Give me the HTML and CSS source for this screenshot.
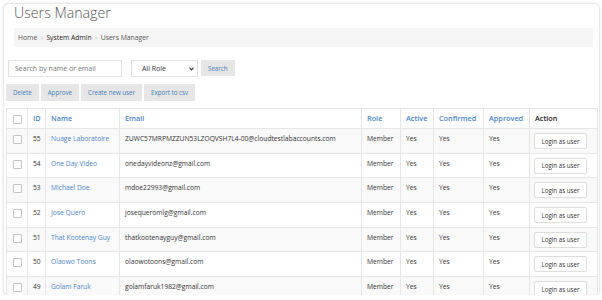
FILE: index.html
```html
<!DOCTYPE html>
<html lang="en">

<head>
    <meta charset="UTF-8">
    <meta name="viewport" content="width=device-width, initial-scale=1.0">
    <title>Users Manager</title>
    <link rel="stylesheet" href="styles.css">
</head>

<body>
    <div class="card">
        <h1 class="page-title">Users Manager</h1>

        <div class="breadcrumb">
            <span>Home</span>
            <span class="sep">&gt;</span>
            <span class="current-section">System Admin</span>
            <span class="sep">&gt;</span>
            <span>Users Manager</span>
        </div>

        <div class="search-bar">
            <input type="text" class="search-input" placeholder="Search by name or email">
            <div class="role-select">
                <span>All Role</span>
                <svg width="5" height="4" viewBox="0 0 5 4"><path d="M0.5 0.7 L2.5 2.8 L4.5 0.7" fill="none" stroke="#333" stroke-width="1.2"/></svg>
            </div>
            <button class="btn">Search</button>
        </div>

        <div class="actions">
            <button class="btn">Delete</button>
            <button class="btn">Approve</button>
            <button class="btn">Create new user</button>
            <button class="btn">Export to csv</button>
        </div>

        <table class="users-table">
            <colgroup>
                <col style="width: 21px">
                <col style="width: 18px">
                <col style="width: 74px">
                <col style="width: 242px">
                <col style="width: 39px">
                <col style="width: 33px">
                <col style="width: 50px">
                <col style="width: 46px">
                <col>
            </colgroup>
            <thead>
                <tr>
                    <th class="cb-cell"><span class="checkbox"></span></th>
                    <th>ID</th>
                    <th>Name</th>
                    <th>Email</th>
                    <th>Role</th>
                    <th>Active</th>
                    <th>Confirmed</th>
                    <th>Approved</th>
                    <th class="plain">Action</th>
                </tr>
            </thead>
            <tbody>
                <tr>
                    <td class="cb-cell"><span class="checkbox"></span></td>
                    <td>55</td>
                    <td><a href="#">Nuage Laboratoire</a></td>
                    <td>ZUWC57MRPMZZUN53LZOQVSH7L4-00@cloudtestlabaccounts.com</td>
                    <td>Member</td>
                    <td>Yes</td>
                    <td>Yes</td>
                    <td>Yes</td>
                    <td><button class="btn-login">Login as user</button></td>
                </tr>
                <tr>
                    <td class="cb-cell"><span class="checkbox"></span></td>
                    <td>54</td>
                    <td><a href="#">One Day Video</a></td>
                    <td>onedayvideonz@gmail.com</td>
                    <td>Member</td>
                    <td>Yes</td>
                    <td>Yes</td>
                    <td>Yes</td>
                    <td><button class="btn-login">Login as user</button></td>
                </tr>
                <tr>
                    <td class="cb-cell"><span class="checkbox"></span></td>
                    <td>53</td>
                    <td><a href="#">Michael Doe</a></td>
                    <td>mdoe22993@gmail.com</td>
                    <td>Member</td>
                    <td>Yes</td>
                    <td>Yes</td>
                    <td>Yes</td>
                    <td><button class="btn-login">Login as user</button></td>
                </tr>
                <tr>
                    <td class="cb-cell"><span class="checkbox"></span></td>
                    <td>52</td>
                    <td><a href="#">Jose Quero</a></td>
                    <td>josequeromlg@gmail.com</td>
                    <td>Member</td>
                    <td>Yes</td>
                    <td>Yes</td>
                    <td>Yes</td>
                    <td><button class="btn-login">Login as user</button></td>
                </tr>
                <tr>
                    <td class="cb-cell"><span class="checkbox"></span></td>
                    <td>51</td>
                    <td><a href="#">That Kootenay Guy</a></td>
                    <td>thatkootenayguy@gmail.com</td>
                    <td>Member</td>
                    <td>Yes</td>
                    <td>Yes</td>
                    <td>Yes</td>
                    <td><button class="btn-login">Login as user</button></td>
                </tr>
                <tr>
                    <td class="cb-cell"><span class="checkbox"></span></td>
                    <td>50</td>
                    <td><a href="#">Olaowo Toons</a></td>
                    <td>olaowotoons@gmail.com</td>
                    <td>Member</td>
                    <td>Yes</td>
                    <td>Yes</td>
                    <td>Yes</td>
                    <td><button class="btn-login">Login as user</button></td>
                </tr>
                <tr>
                    <td class="cb-cell"><span class="checkbox"></span></td>
                    <td>49</td>
                    <td><a href="#">Golam Faruk</a></td>
                    <td>golamfaruk1982@gmail.com</td>
                    <td>Member</td>
                    <td>Yes</td>
                    <td>Yes</td>
                    <td>Yes</td>
                    <td><button class="btn-login">Login as user</button></td>
                </tr>
            </tbody>
        </table>
    </div>
</body>

</html>
```

FILE: styles.css
```css
body {
    margin: 0;
    background: #fff;
    font-family: "Open Sans", "DejaVu Sans", sans-serif;
    font-size: 6.7px;
    color: #333;
}

.card {
    margin: 4px 3px 0 4px;
    height: 291px;
    border-radius: 5px;
    box-shadow: 0 0 3px rgba(0, 0, 0, 0.25);
    background: #fff;
    overflow: hidden;
}

.page-title {
    margin: 0 0 0 10px;
    font-size: 14.2px;
    font-weight: 300;
    line-height: 18px;
    color: #555;
}

.breadcrumb {
    margin: 6px 6px 0 10px;
    height: 19px;
    padding-left: 4px;
    background: #f5f5f5;
    display: flex;
    align-items: center;
    gap: 3px;
    font-size: 6.8px;
    color: #555;
}

.breadcrumb .sep {
    color: #aaa;
    font-size: 5.5px;
}

.breadcrumb .current-section {
    color: #222;
}

.search-bar {
    margin: 13px 0 0 4px;
    display: flex;
    align-items: flex-start;
}

.search-input {
    box-sizing: border-box;
    width: 114px;
    height: 17px;
    margin: 0;
    padding: 0 0 0 6px;
    border: 1px solid #e2e2e2;
    font-family: inherit;
    font-size: 7px;
    color: #333;
    outline: none;
}

.search-input::placeholder {
    color: #777;
}

.role-select {
    box-sizing: border-box;
    width: 67px;
    height: 17px;
    margin-left: 9px;
    padding: 0 3px 0 10px;
    border: 1px solid #e2e2e2;
    display: flex;
    align-items: center;
    justify-content: space-between;
    font-size: 7px;
    color: #333;
}

.btn {
    height: 17px;
    margin: 0;
    padding: 0 7px;
    border: none;
    background: #e6e6e6;
    color: #3f7cbc;
    font-family: inherit;
    font-size: 6.2px;
    cursor: pointer;
}

.search-bar .btn {
    margin-left: 3px;
    height: 16px;
}

.actions {
    margin: 7px 0 0 2px;
    display: flex;
    gap: 2px;
}

.users-table {
    margin: 7px 1px 0 2px;
    width: 592px;
    border-collapse: collapse;
    table-layout: fixed;
}

.users-table th,
.users-table td {
    border: 1px solid #e6e6e6;
    padding: 4px 5px 3.7px;
    line-height: 11px;
    text-align: left;
    vertical-align: top;
    white-space: nowrap;
    overflow: hidden;
}

.users-table th {
    padding-bottom: 4px;
    font-size: 7.3px;
    font-weight: 600;
    color: #4a86c8;
}

.users-table th.plain {
    color: #222;
}

.users-table tbody tr:nth-child(odd) {
    background: #f9f9f9;
}

.users-table a {
    color: #4a86c8;
    text-decoration: none;
}

.users-table .cb-cell {
    padding-left: 6px;
    padding-right: 0;
}

.checkbox {
    display: inline-block;
    width: 7px;
    height: 7px;
    margin-top: 2px;
    border: 1px solid #c4c4c4;
    border-radius: 1px;
    background: #fff;
    vertical-align: top;
}

.btn-login {
    display: block;
    width: 53px;
    height: 16px;
    margin: 0 0 0 -1px;
    padding: 0;
    border: 1px solid #ddd;
    border-radius: 2px;
    background: #fff;
    color: #333;
    font-family: inherit;
    font-size: 6.2px;
}
```
